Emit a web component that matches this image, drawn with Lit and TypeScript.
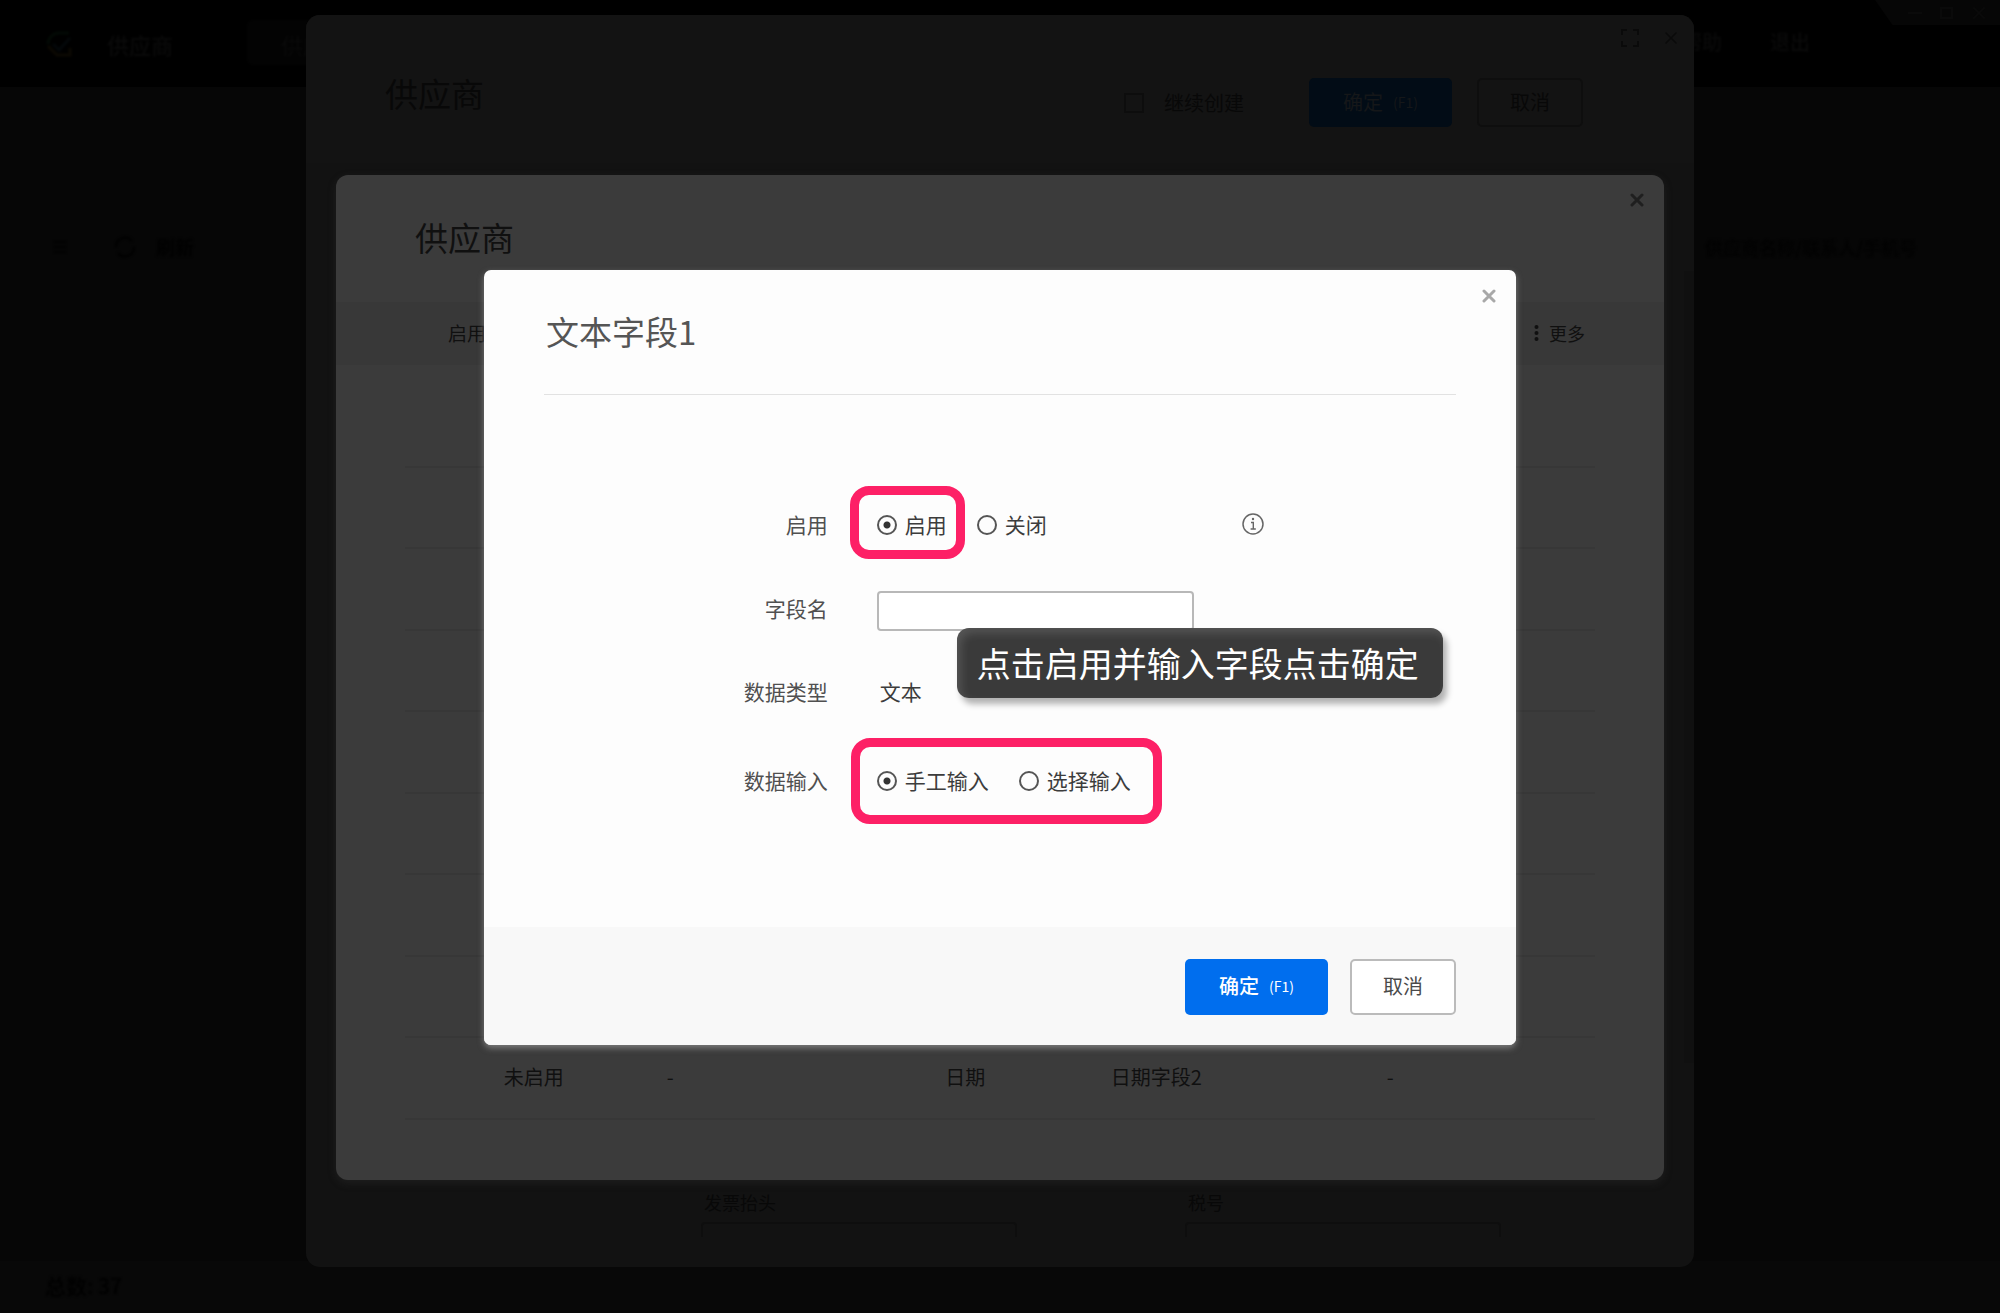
import { LitElement, html, css, svg } from "lit";
import { customElement, property, state } from "lit/decorators.js";

const cross = (stroke: number) => svg`<path d="M2 2 L12 12 M12 2 L2 12" fill="none" stroke="currentColor" stroke-width=${stroke} stroke-linecap="round"/>`;

const buttons = css`
  button {
    font: inherit;
    color: inherit;
    background: none;
    border: 0;
    padding: 0;
    cursor: pointer;
  }
  .btn {
    box-sizing: border-box;
    display: flex;
    align-items: center;
    justify-content: center;
    padding-bottom: 2px;
    border-radius: 5px;
    font-size: 20px;
    line-height: 24px;
  }
  .btn small {
    font-size: 14px;
    font-weight: 400;
    margin-left: 10px;
  }
  .primary {
    width: 143px;
  }
  .secondary {
    width: 106px;
    border: 2px solid;
  }
  svg {
    display: block;
  }
`;

/* Application window behind the dialogs */
@customElement("app-backdrop")
export class AppBackdrop extends LitElement {
  static styles = [
    buttons,
    css`
      :host {
        display: flex;
        flex-direction: column;
        background: #060606;
        color: #010101;
      }
      .topbar {
        display: flex;
        align-items: flex-start;
        height: 87px;
        background: #000;
        color: #0a0a0a;
      }
      .soft {
        filter: blur(1px);
      }
      .logo {
        margin: 30px 34px 0 45px;
      }
      .name {
        margin-top: 28px;
        font-size: 22px;
        line-height: 32px;
        font-weight: 500;
      }
      .tab {
        margin: 20px 0 0 74px;
        padding: 0 34px;
        height: 45px;
        line-height: 48px;
        font-size: 22px;
        border-radius: 6px;
        background: #030303;
      }
      .links {
        display: flex;
        gap: 48px;
        margin: 26px 65px 0 auto;
        font-size: 20px;
        line-height: 32px;
        font-weight: 500;
      }
      .links a {
        color: inherit;
        text-decoration: none;
      }
      .controls {
        display: flex;
        justify-content: flex-end;
        gap: 18px;
        width: 125px;
        height: 25px;
        padding: 6px 14px 0 0;
        box-sizing: border-box;
        background: #060606;
        color: #0a0a0a;
        clip-path: polygon(0 0, 100% 0, 100% 100%, 14% 100%);
      }
      .tools {
        display: flex;
        align-items: center;
        gap: 20px;
        margin-top: 144px;
        padding: 0 83px 0 50px;
        font-size: 19px;
        line-height: 32px;
        font-weight: 500;
      }
      .tools .menu {
        margin-right: 24px;
      }
      .tools .hint {
        margin-left: auto;
        font-size: 18px;
        color: #020202;
      }
      .status {
        margin-top: auto;
        padding: 0 45px;
        height: 52px;
        line-height: 48px;
        font-size: 21px;
        font-weight: 500;
        background: #080808;
      }
    `,
  ];

  render() {
    return html`
      <header class="topbar">
        <svg class="logo soft" width="28" height="28" viewBox="0 0 28 28">
          <path d="M3 14 A11 11 0 0 1 14 3 L24 3" fill="none" stroke="#030a05" stroke-width="3" />
          <path d="M8 14 L14 20 L25 8" fill="none" stroke="#04080a" stroke-width="3" />
          <path d="M3 16 L12 25 L25 25 L25 18" fill="none" stroke="#0c0903" stroke-width="3" />
        </svg>
        <span class="name soft">供应商</span>
        <span class="tab soft">供应商</span>
        <nav class="links soft"><a href="#help">帮助</a><a href="#quit">退出</a></nav>
        <div class="controls">
          <svg width="14" height="14" viewBox="0 0 14 14"><path d="M0 7 H14" stroke="currentColor" stroke-width="2" /></svg>
          <svg width="14" height="14" viewBox="0 0 14 14"><rect x="1" y="2" width="11" height="10" fill="none" stroke="currentColor" stroke-width="2" /></svg>
          <svg width="14" height="14" viewBox="0 0 14 14">${cross(2)}</svg>
        </div>
      </header>
      <div class="tools soft">
        <svg class="menu" width="20" height="20" viewBox="0 0 20 20"><path d="M4 5 H16 M4 10 H16 M4 15 H16" stroke="currentColor" stroke-width="2" /></svg>
        <svg width="22" height="22" viewBox="0 0 22 22"><path d="M2 11 A9 9 0 0 1 18 5 M20 11 A9 9 0 0 1 4 17" fill="none" stroke="currentColor" stroke-width="2" /></svg>
        <span>刷新</span>
        <span class="hint">供应商名称/联系人/手机号</span>
      </div>
      <footer class="status"><div class="soft">总数: 37</div></footer>
    `;
  }
}

/* Dialog for creating a supplier */
@customElement("supplier-dialog")
export class SupplierDialog extends LitElement {
  static styles = [
    buttons,
    css`
      :host {
        display: flex;
        flex-direction: column;
        border-radius: 14px;
        overflow: hidden;
        background: #121212;
        color: #080808;
      }
      .head {
        display: flex;
        align-items: flex-start;
        height: 148px;
        padding-left: 79px;
        box-sizing: border-box;
        background: #131313;
      }
      h2 {
        margin: 54px auto 0 0;
        font-size: 33px;
        line-height: 48px;
        font-weight: 400;
      }
      .again {
        display: flex;
        align-items: center;
        gap: 20px;
        margin: 76px 65px 0 0;
        font-size: 20px;
        line-height: 24px;
      }
      .again input {
        appearance: none;
        box-sizing: border-box;
        margin: 0;
        width: 20px;
        height: 20px;
        border: 2px solid #0d0d0d;
      }
      .btn {
        height: 49px;
        margin-top: 63px;
      }
      .primary {
        background: #020c16;
        color: #151719;
      }
      .secondary {
        margin-left: 25px;
        border-color: #0e0e0e;
      }
      .icons {
        display: flex;
        align-items: center;
        gap: 25px;
        margin: 14px 16px 0 38px;
        height: 18px;
        color: #0a0a0a;
      }
      .body {
        flex: 1;
        display: flex;
      }
      .fields {
        flex: 1;
        display: flex;
        align-items: flex-end;
        gap: 168px;
        padding: 0 183px 30px 395px;
      }
      .field {
        flex: 1;
        height: 47px;
        overflow: hidden;
        font-size: 18px;
        line-height: 24px;
      }
      .field label {
        display: block;
        padding: 0 3px 8px;
      }
      .field input {
        box-sizing: border-box;
        width: 100%;
        height: 38px;
        border: 2px solid #0e0e0e;
        border-radius: 4px;
        background: none;
      }
      .track {
        width: 10px;
        margin: 108px 0 204px;
        background: #101010;
      }
    `,
  ];

  render() {
    return html`
      <header class="head">
        <h2>供应商</h2>
        <label class="again"><input type="checkbox" />继续创建</label>
        <button class="btn primary">确定<small>(F1)</small></button>
        <button class="btn secondary">取消</button>
        <div class="icons">
          <button aria-label="全屏">
            <svg width="18" height="18" viewBox="0 0 18 18"><path d="M1 6 V1 H6 M12 1 H17 V6 M17 12 V17 H12 M6 17 H1 V12" fill="none" stroke="currentColor" stroke-width="2" /></svg>
          </button>
          <button aria-label="关闭"><svg width="14" height="14" viewBox="0 0 14 14">${cross(1.5)}</svg></button>
        </div>
      </header>
      <div class="body">
        <div class="fields">
          <div class="field"><label for="invoice">发票抬头</label><input id="invoice" type="text" /></div>
          <div class="field"><label for="tax">税号</label><input id="tax" type="text" /></div>
        </div>
        <div class="track"></div>
      </div>
    `;
  }
}

/* Dialog that lists the custom fields */
@customElement("fields-dialog")
export class FieldsDialog extends LitElement {
  static styles = [
    buttons,
    css`
      :host {
        display: block;
        border-radius: 12px;
        background: #3b3b3b;
        color: #101010;
        box-shadow: 0 3px 8px rgba(60, 60, 60, 0.3);
      }
      .head {
        display: flex;
        justify-content: space-between;
        align-items: flex-start;
        height: 127px;
        box-sizing: border-box;
        padding: 18px 20px 0 79px;
      }
      h2 {
        margin: 20px 0 0;
        font-size: 33px;
        line-height: 48px;
        font-weight: 400;
      }
      .close {
        color: #1f1f1f;
      }
      .band {
        display: flex;
        align-items: center;
        justify-content: space-between;
        height: 63px;
        box-sizing: border-box;
        padding: 0 79px 2px 112px;
        background: #383838;
        font-size: 19px;
      }
      .more {
        display: flex;
        align-items: center;
        gap: 10px;
        font-size: 18px;
      }
      .list {
        padding: 20px 69px 60px;
      }
      table {
        width: 100%;
        table-layout: fixed;
        border-collapse: collapse;
        font-size: 20px;
        line-height: 24px;
      }
      td {
        height: 82px;
        box-sizing: border-box;
        padding: 0 0 3px;
        border-bottom: 2px solid #373737;
      }
      tr:nth-child(even) td {
        height: 81px;
      }
      .lead {
        width: 8.3%;
      }
      .status {
        width: 13.7%;
      }
      .title {
        width: 23.4%;
      }
      .type {
        width: 13.9%;
      }
      .key {
        width: 23.2%;
      }
    `,
  ];

  private rows: string[][] = [...Array.from({ length: 8 }, () => ["", "", "", "", ""]), ["未启用", "-", "日期", "日期字段2", "-"]];

  render() {
    return html`
      <header class="head">
        <h2>供应商</h2>
        <button class="close" aria-label="关闭"><svg width="14" height="14" viewBox="0 0 14 14">${cross(3)}</svg></button>
      </header>
      <div class="band">
        <span>启用</span>
        <button class="more">
          <svg width="5" height="20" viewBox="0 0 5 20" fill="currentColor"><circle cx="2.5" cy="4" r="2" /><circle cx="2.5" cy="10" r="2" /><circle cx="2.5" cy="16" r="2" /></svg>
          更多
        </button>
      </div>
      <div class="list">
        <table>
          <colgroup>
            <col class="lead" /><col class="status" /><col class="title" /><col class="type" /><col class="key" /><col />
          </colgroup>
          <tbody>
            ${this.rows.map((r) => html`<tr><td></td>${r.map((c) => html`<td>${c}</td>`)}</tr>`)}
          </tbody>
        </table>
      </div>
    `;
  }
}

/* Dialog for editing one text field */
@customElement("field-editor")
export class FieldEditor extends LitElement {
  static styles = [
    buttons,
    css`
      :host {
        display: block;
        border-radius: 7px;
        background: #fdfdfd;
        color: #3c3c3c;
        box-shadow: 0 3px 6px rgba(190, 190, 190, 0.5);
      }
      .head {
        display: flex;
        justify-content: space-between;
        height: 124px;
        margin: 0 60px;
        border-bottom: 1px solid #e2e2e2;
      }
      h2 {
        margin: 37px 0 0 2px;
        font-size: 33px;
        line-height: 48px;
        font-weight: 400;
        color: #555;
      }
      .close {
        align-self: flex-start;
        margin: 19px -40px 0 0;
        color: #a8a8a8;
      }
      form {
        display: grid;
        grid-template-columns: 33.3% 1fr;
        grid-template-rows: 84px 84px 82px 96px;
        column-gap: 49px;
        align-items: center;
        padding: 88px 0 98px;
        font-size: 21px;
        line-height: 40px;
      }
      .caption,
      .value,
      .text {
        padding-bottom: 2px;
      }
      .caption {
        text-align: right;
        color: #505050;
      }
      .line {
        display: flex;
        align-items: center;
      }
      .group {
        position: relative;
        display: flex;
        gap: 30px;
      }
      .wide {
        min-width: 317px;
        margin-right: 48px;
      }
      .option {
        position: relative;
        display: flex;
        align-items: center;
        gap: 8px;
      }
      .option input {
        appearance: none;
        box-sizing: border-box;
        width: 20px;
        height: 20px;
        margin: 0;
        border: 2px solid #555;
        border-radius: 50%;
      }
      .option input:checked {
        background: radial-gradient(circle, #333 0 3px, transparent 4px);
      }
      .ring {
        position: absolute;
        inset: -18px -18px -13px -27px;
        border: 9px solid #fd2066;
        border-radius: 19px;
        pointer-events: none;
      }
      .ring.all {
        inset: -22px -31px -22px -26px;
      }
      .info {
        padding-bottom: 3px;
        color: #666;
      }
      .entry {
        position: relative;
        width: 317px;
        padding-top: 3px;
      }
      .entry input {
        display: block;
        box-sizing: border-box;
        width: 100%;
        height: 40px;
        padding: 0 10px;
        border: 2px solid #b8b8b8;
        border-radius: 4px;
        background: #fff;
        font: inherit;
      }
      .tip {
        position: absolute;
        left: 80px;
        top: 40px;
        z-index: 1;
        padding: 11px 24px 11px 20px;
        border-radius: 12px;
        background: rgba(56, 56, 56, 0.99);
        box-shadow: 4px 6px 6px rgba(0, 0, 0, 0.3), inset 4px 5px 10px rgba(255, 255, 255, 0.14);
        color: #fff;
        font-size: 34px;
        line-height: 48px;
        white-space: nowrap;
      }
      .value {
        padding-left: 3px;
      }
      .foot {
        display: flex;
        justify-content: flex-end;
        gap: 22px;
        padding: 32px 60px 30px;
        border-radius: 0 0 7px 7px;
        background: #f8f8f8;
      }
      .btn {
        height: 56px;
      }
      .primary {
        background: #006eee;
        color: #fff;
        font-weight: 500;
      }
      .secondary {
        border-color: #bbb;
        background: #fff;
        color: #4a4a4a;
      }
    `,
  ];

  @property() heading = "文本字段1";
  @state() private enabled = true;
  @state() private manual = true;

  render() {
    return html`
      <header class="head">
        <h2>${this.heading}</h2>
        <button class="close" aria-label="关闭"><svg width="14" height="14" viewBox="0 0 14 14">${cross(3)}</svg></button>
      </header>
      <form @submit=${(e: Event) => e.preventDefault()}>
        <span class="caption" id="on">启用</span>
        <div class="line">
          <div class="group wide" role="radiogroup" aria-labelledby="on">
            <label class="option">
              <input type="radio" name="on" .checked=${this.enabled} @change=${() => (this.enabled = true)} />
              <span class="text">启用</span>
              <span class="ring"></span>
            </label>
            <label class="option">
              <input type="radio" name="on" .checked=${!this.enabled} @change=${() => (this.enabled = false)} />
              <span class="text">关闭</span>
            </label>
          </div>
          <svg class="info" width="22" height="22" viewBox="0 0 22 22" fill="none" stroke="currentColor">
            <circle cx="11" cy="11" r="10" stroke-width="1.5" />
            <path d="M9 9.5 H11.3 V16 M8.6 16 H13.8" stroke-width="1.4" />
            <circle cx="11" cy="6" r="1.2" fill="currentColor" stroke="none" />
          </svg>
        </div>

        <label class="caption" for="name">字段名</label>
        <div class="entry">
          <input id="name" type="text" />
          <div class="tip" role="tooltip">点击启用并输入字段点击确定</div>
        </div>

        <span class="caption">数据类型</span>
        <span class="value">文本</span>

        <span class="caption" id="mode">数据输入</span>
        <div class="line">
          <div class="group" role="radiogroup" aria-labelledby="mode">
            <label class="option">
              <input type="radio" name="mode" .checked=${this.manual} @change=${() => (this.manual = true)} />
              <span class="text">手工输入</span>
            </label>
            <label class="option">
              <input type="radio" name="mode" .checked=${!this.manual} @change=${() => (this.manual = false)} />
              <span class="text">选择输入</span>
            </label>
            <span class="ring all"></span>
          </div>
        </div>
      </form>
      <footer class="foot">
        <button class="btn primary">确定<small>(F1)</small></button>
        <button class="btn secondary">取消</button>
      </footer>
    `;
  }
}

@customElement("app-root")
export class AppRoot extends LitElement {
  static styles = css`
    :host {
      display: grid;
      grid-template: minmax(100vh, auto) / 100%;
      justify-items: center;
      align-items: start;
      overflow: hidden;
      background: #060606;
      font-family: "Noto Sans CJK SC", "Noto Sans", sans-serif;
    }
    .layer {
      grid-area: 1 / 1;
      isolation: isolate;
    }
    .page {
      justify-self: stretch;
      align-self: stretch;
    }
    .create {
      align-self: stretch;
      width: 69.4%;
      margin: 15px 0 46px;
    }
    .fields {
      width: 66.4%;
      margin-top: 175px;
    }
    .editor {
      width: 51.6%;
      margin-top: 270px;
    }
  `;

  render() {
    return html`
      <app-backdrop class="layer page"></app-backdrop>
      <supplier-dialog class="layer create"></supplier-dialog>
      <fields-dialog class="layer fields" role="dialog"></fields-dialog>
      <field-editor class="layer editor" role="dialog"></field-editor>
    `;
  }
}
